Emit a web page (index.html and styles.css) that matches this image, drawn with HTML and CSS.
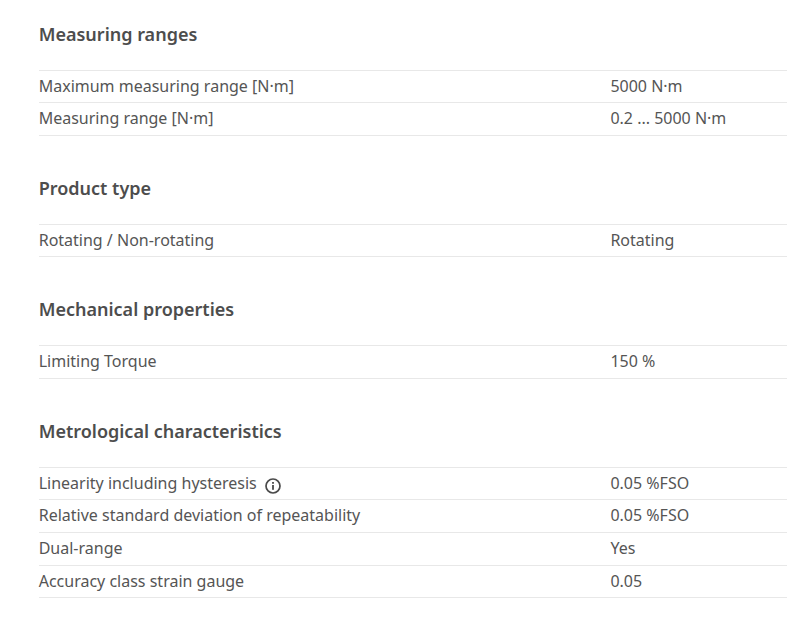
FILE: index.html
```html
<!DOCTYPE html>
<html lang="en">
<head>
<meta charset="utf-8">
<title>Specifications</title>
<link rel="stylesheet" href="styles.css">
</head>
<body>
<main class="specs">
  <section class="group">
    <h2 class="group-title">Measuring ranges</h2>
    <div class="rows">
      <div class="row"><span>Maximum measuring range [N·m]</span><span>5000 N·m</span></div>
      <div class="row"><span>Measuring range [N·m]</span><span>0.2 ... 5000 N·m</span></div>
    </div>
  </section>
  <section class="group">
    <h2 class="group-title">Product type</h2>
    <div class="rows">
      <div class="row"><span>Rotating / Non-rotating</span><span>Rotating</span></div>
    </div>
  </section>
  <section class="group">
    <h2 class="group-title">Mechanical properties</h2>
    <div class="rows">
      <div class="row"><span>Limiting Torque</span><span>150 %</span></div>
    </div>
  </section>
  <section class="group">
    <h2 class="group-title">Metrological characteristics</h2>
    <div class="rows">
      <div class="row"><span class="with-icon">Linearity including hysteresis
        <svg class="info" viewBox="0 0 16 16" width="16" height="16" aria-hidden="true"><circle cx="8" cy="8" r="7" fill="none" stroke="#4a4a4a" stroke-width="1.7"/><rect x="7.1" y="7" width="1.8" height="4.8" fill="#4a4a4a"/><rect x="7.1" y="4" width="1.8" height="1.8" fill="#4a4a4a"/></svg></span><span>0.05 %FSO</span></div>
      <div class="row"><span>Relative standard deviation of repeatability</span><span>0.05 %FSO</span></div>
      <div class="row"><span>Dual-range</span><span>Yes</span></div>
      <div class="row"><span>Accuracy class strain gauge</span><span>0.05</span></div>
    </div>
  </section>
</main>
</body>
</html>
```
FILE: styles.css
```css
html, body { margin: 0; padding: 0; background: #fff; }
body { font-family: "Noto Sans", "Open Sans", sans-serif; color: #555555; font-size: 16px; overflow: hidden; }
.specs { padding: 19.6px 0 0 38.7px; display: flex; flex-direction: column; gap: 37.93px; }
.group-title { margin: 0 0 22px; font-size: 18px; font-weight: 600; line-height: 28px; color: #4d4d4d; }
.rows { border-top: 1px solid #e8e8e8; }
.row { display: grid; grid-template-columns: 571.7px 1fr; height: 31.6px; align-items: start; border-bottom: 1px solid #e8e8e8; line-height: 31px; }
.with-icon { display: flex; align-items: center; gap: 8px; }
.info { flex: none; margin-top: 5px; }
```
